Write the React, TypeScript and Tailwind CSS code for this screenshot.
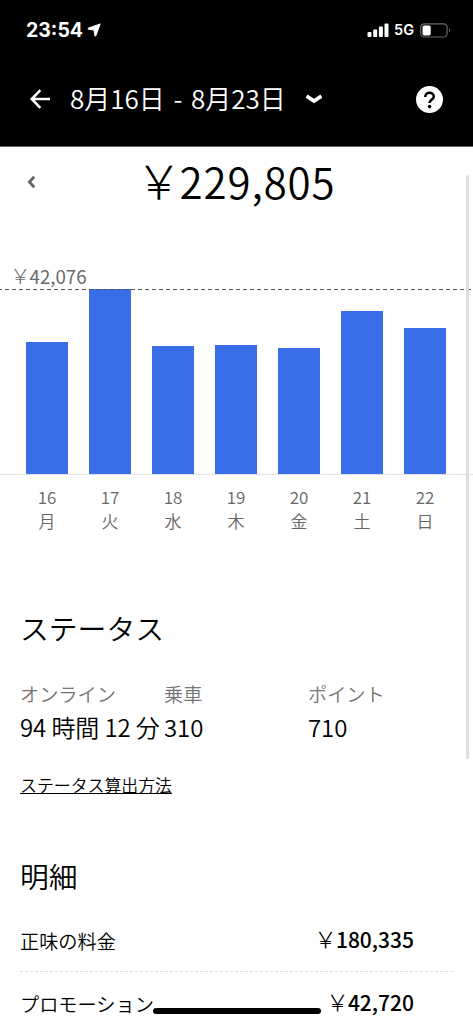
import { useState } from "react";

const days = [
  { date: 16, label: "月", height: 132 },
  { date: 17, label: "火", height: 185 },
  { date: 18, label: "水", height: 128 },
  { date: 19, label: "木", height: 129 },
  { date: 20, label: "金", height: 126 },
  { date: 21, label: "土", height: 163 },
  { date: 22, label: "日", height: 146 },
];

const stats = [
  { label: "オンライン", value: "94 時間 12 分" },
  { label: "乗車", value: "310" },
  { label: "ポイント", value: "710" },
];

const breakdown = [
  { label: "正味の料金", value: "180,335" },
  { label: "プロモーション", value: "42,720" },
];

function StatusBar() {
  return (
    <div className="flex h-[60px] items-center pl-[26px] pr-[22px] font-['Inter',sans-serif] text-white">
      <span className="mt-[2px] text-[19.5px] font-bold leading-none">23:54</span>
      <svg className="ml-1 h-[14px] w-[14px]" viewBox="0 0 14 14" fill="currentColor" stroke="currentColor" strokeLinejoin="round">
        <path d="M13.2.9 1.2 5.2l-.1.9 6 1 .8 5.9.9-.1z" />
      </svg>
      <svg className="ml-auto h-[14px] w-[22px]" viewBox="0 0 22 14" fill="currentColor">
        <rect x="0.5" y="9" width="4" height="5" rx="1" />
        <rect x="6.2" y="6.5" width="4" height="7.5" rx="1" />
        <rect x="11.9" y="3.5" width="4" height="10.5" rx="1" />
        <rect x="17.5" y="0.5" width="4" height="13.5" rx="1" />
      </svg>
      <span className="ml-[5px] mt-px text-[14.5px] font-semibold leading-none">5G</span>
      <svg className="ml-[6px] h-[15px] w-[31px]" viewBox="0 0 31 15" fill="none">
        <rect x="0.7" y="0.8" width="26.4" height="13.2" rx="3.6" stroke="#6b6b6b" strokeWidth="1.2" />
        <rect x="2.5" y="2.4" width="8.2" height="10" rx="1.6" fill="#fff" />
        <path d="M29 5.2c1.4.6 1.4 3.8 0 4.4z" fill="#6b6b6b" />
      </svg>
    </div>
  );
}

function Header() {
  return (
    <header className="h-[147px] border-b border-[#666] bg-black text-white">
      <StatusBar />
      <div className="flex h-[78px] items-center px-[30px]">
        <svg className="h-5 w-5" viewBox="0 0 20 20" fill="none" stroke="currentColor" strokeWidth="2.6">
          <path d="M20 10H2M10.3 1.2 1.7 10l8.6 8.8" />
        </svg>
        <h1 className="-mt-[3px] ml-[20px] whitespace-nowrap text-[26px] font-[350] leading-[30px] [word-spacing:2.8px]">
          8月16日 - 8月23日
        </h1>
        <svg className="ml-[20px] h-[10px] w-4" viewBox="0 0 16 10" fill="none" stroke="currentColor" strokeWidth="3.8">
          <path d="m.6 2 7.4 5 7.4-5" />
        </svg>
        <svg className="ml-auto h-[27px] w-[27px]" viewBox="0 0 27 27">
          <circle cx="13.5" cy="13.5" r="13.5" fill="#fff" />
          <path d="M9.2 10.9c0-5.4 8.6-5.4 8.6-.4 0 3-4.2 3-4.2 6.6" fill="none" stroke="#000" strokeWidth="2.5" />
          <circle cx="13.6" cy="20.6" r="1.8" fill="#000" />
        </svg>
      </div>
    </header>
  );
}

function Yen() {
  return <span className="-mx-[0.05em] text-[1.1em] font-light leading-none tracking-normal">￥</span>;
}

function Chart({ selected, onSelect }: { selected: number | null; onSelect: (date: number) => void }) {
  return (
    <section>
      <p className="h-[25px] pl-[11px] text-[18.7px] leading-6 text-[#6b6b6b]">
        <Yen />
        42,076
      </p>
      <svg className="relative -mb-px block h-px w-full" viewBox="0 0 473 1" preserveAspectRatio="none">
        <path d="M0 .5H473" stroke="#555" strokeDasharray="4 3" strokeDashoffset="2" />
      </svg>
      <div className="box-content flex h-[185px] items-end gap-[21px] border-b border-[#e2e2e2] pl-[26px]">
        {days.map((day) => (
          <button
            key={day.date}
            onClick={() => onSelect(day.date)}
            aria-pressed={selected === day.date}
            className="w-[42px] bg-[#3a6ee8]"
            style={{ height: day.height }}
          />
        ))}
      </div>
      <div className="mt-[10px] flex gap-[21px] pl-[26px]">
        {days.map((day) => (
          <div key={day.date} className="w-[42px] text-center text-[17px] font-[350] leading-6 text-[#666]">
            <div>{day.date}</div>
            <div>{day.label}</div>
          </div>
        ))}
      </div>
    </section>
  );
}

export default function App() {
  const [selected, setSelected] = useState<number | null>(null);

  return (
    <div className="relative h-[1024px] w-[473px] overflow-hidden bg-white font-['Noto_Sans_CJK_JP',sans-serif] text-black">
      <Header />

      {/* Weekly total */}
      <div className="flex h-[117px] items-start pl-[27px] pr-[38px]">
        <svg className="mt-[29px] h-3 w-2" viewBox="0 0 8 12" fill="none" stroke="#666" strokeWidth="2.8">
          <path d="M7.2.7 2.4 6l4.8 5.3" />
        </svg>
        <p className="ml-[103px] mt-[9px] whitespace-nowrap text-[42px] font-[350] leading-[50px] tracking-[0.9px]">
          <Yen />
          229,805
        </p>
      </div>

      <Chart selected={selected} onSelect={setSelected} />

      {/* Stats */}
      <section className="mt-[77px] pl-5">
        <h2 className="text-[28.8px] font-[350] leading-[36px]">ステータス</h2>
        <div className="mt-[34px] grid grid-cols-[144px_144px_144px]">
          {stats.map((stat) => (
            <div key={stat.label} className="whitespace-nowrap">
              <div className="text-[19.2px] font-[350] leading-[28px] text-[#757575]">{stat.label}</div>
              <div className="mt-[2px] text-[24px] font-[350] leading-[34px] tracking-[-0.1px]">{stat.value}</div>
            </div>
          ))}
        </div>
        <a
          href="#"
          className="mt-[29px] block text-[16.9px] font-[350] leading-6 underline decoration-1 underline-offset-1"
        >
          ステータス算出方法
        </a>
      </section>

      {/* Breakdown */}
      <section className="mt-[61px] px-5">
        <h2 className="text-[28.8px] font-[350] leading-[36px]">明細</h2>
        <div className="mt-[15px]">
          {breakdown.map((item) => (
            <div
              key={item.label}
              className="flex h-[63px] items-center justify-between border-b border-dashed border-[#ddd] pr-[39px]"
            >
              <span className="mt-px text-[19.2px] font-[350] leading-7">{item.label}</span>
              <span className="-mt-[2px] text-[21px] font-medium leading-7">
                <Yen />
                {item.value}
              </span>
            </div>
          ))}
        </div>
      </section>

      {/* Scroll bar and home indicator */}
      <div className="absolute right-[4px] top-[175px] h-[584px] w-[3px] rounded-full bg-[#dedede]" />
      <div className="absolute bottom-[10px] left-[153px] h-[6px] w-[168px] rounded-full bg-black" />
    </div>
  );
}
